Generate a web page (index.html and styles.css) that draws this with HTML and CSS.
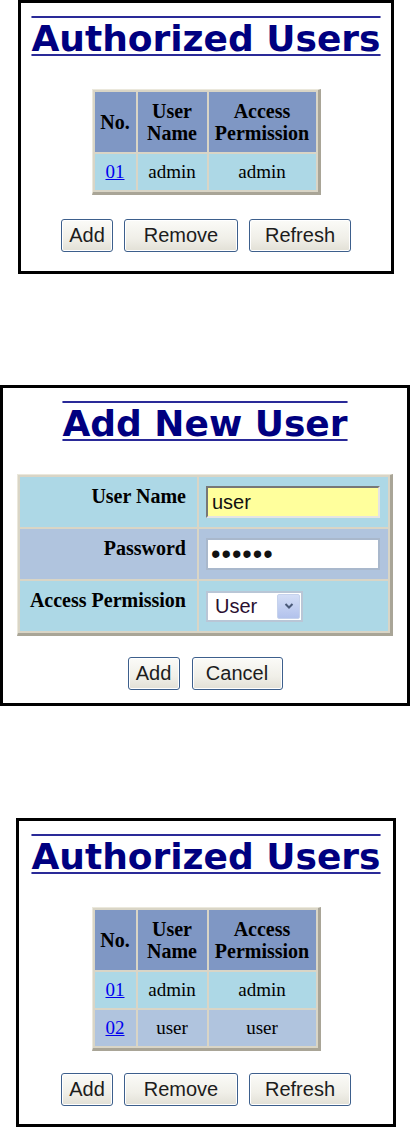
FILE: index.html
```html
<!DOCTYPE html>
<html lang="en">
<head>
  <meta charset="UTF-8" />
  <title>Authorized Users</title>
  <link rel="stylesheet" href="styles.css">
</head>
<body>

  <div class="shot shot-first">
    <h1 class="title"><span>Authorized Users</span></h1>
    <table class="grid users">
      <tr class="head">
        <th class="c-no">No.</th>
        <th class="c-name">User Name</th>
        <th class="c-perm">Access Permission</th>
      </tr>
      <tr class="row-a">
        <td><a href="#">01</a></td>
        <td>admin</td>
        <td>admin</td>
      </tr>
    </table>
    <div class="actions">
      <button class="btn w-add">Add</button>
      <button class="btn w-remove">Remove</button>
      <button class="btn w-refresh">Refresh</button>
    </div>
  </div>

  <div class="shot shot-add">
    <h1 class="title"><span>Add New User</span></h1>
    <table class="grid form">
      <tr class="row-a">
        <th class="label">User Name</th>
        <td class="field"><input type="text" class="txt focus" value="user"></td>
      </tr>
      <tr class="row-b">
        <th class="label">Password</th>
        <td class="field"><input type="password" class="txt pass" value="secret"></td>
      </tr>
      <tr class="row-a">
        <th class="label">Access Permission</th>
        <td class="field">
          <div class="select-box">
            <select class="sel">
              <option>User</option>
              <option>Admin</option>
            </select>
            <span class="arrow">
              <svg width="10" height="8" viewBox="0 0 10 8"><path d="M1.5 2 L5 5.5 L8.5 2" fill="none" stroke="#4a5a78" stroke-width="2"/></svg>
            </span>
          </div>
        </td>
      </tr>
    </table>
    <div class="actions">
      <button class="btn w-add">Add</button>
      <button class="btn w-cancel">Cancel</button>
    </div>
  </div>

  <div class="shot shot-last">
    <h1 class="title"><span>Authorized Users</span></h1>
    <table class="grid users">
      <tr class="head">
        <th class="c-no">No.</th>
        <th class="c-name">User Name</th>
        <th class="c-perm">Access Permission</th>
      </tr>
      <tr class="row-a">
        <td><a href="#">01</a></td>
        <td>admin</td>
        <td>admin</td>
      </tr>
      <tr class="row-b">
        <td><a href="#">02</a></td>
        <td>user</td>
        <td>user</td>
      </tr>
    </table>
    <div class="actions">
      <button class="btn w-add">Add</button>
      <button class="btn w-remove">Remove</button>
      <button class="btn w-refresh">Refresh</button>
    </div>
  </div>

</body>
</html>
```

FILE: styles.css
```css
* { box-sizing: border-box; }

body {
  margin: 0;
  background: #fff;
  font-family: "Liberation Serif", "Times New Roman", serif;
  color: #000;
}

/* each screenshot frame */
.shot {
  border: 3px solid #000;
  background: #fff;
  text-align: center;
}

.shot-first { margin-left: 18px; width: 376px; height: 274px; }
.shot-add { margin-top: 111px; width: 410px; height: 321px; }
.shot-last { margin-top: 112px; margin-left: 16px; width: 380px; height: 309px; }

.title {
  margin: 0;
  padding-top: 13px;
  height: 86px;
  font-family: "DejaVu Sans", Verdana, sans-serif;
  font-size: 36px;
  line-height: 46px;
  font-weight: bold;
  color: #000080;
}

.title span {
  text-decoration: underline overline;
  text-decoration-color: #2a2a98;
  text-decoration-thickness: 2px;
  text-underline-offset: 3px;
}

/* tables */
.grid {
  margin: 0 auto;
  border-style: solid;
  border-width: 1px 3px 3px 1px;
  border-color: #ebe8dc #a9a597 #a9a597 #ebe8dc;
  border-spacing: 2px;
  background: #d9d5c6;
  font-size: 19px;
  line-height: 22px;
}

.grid th, .grid td {
  padding: 0;
  text-align: center;
}

.head th {
  background: #7f97c4;
  font-size: 20px;
  height: 60px;
}

.users td { height: 36px; }

.row-a > * { background: #add8e6; }
.row-b > * { background: #b0c4de; }

.c-no { width: 41px; }
.c-name { width: 69px; }
.c-perm { width: 107px; }

.grid a { color: #0000ee; }

/* form table */
.form { width: 376px; }

.form th.label {
  width: 180px;
  height: 50px;
  font-size: 20px;
  text-align: right;
  vertical-align: top;
  padding: 8px 11px 0 0;
}

.form td.field {
  text-align: left;
  padding: 0 8px 0 7px;
}

.txt {
  display: block;
  width: 174px;
  height: 32px;
  margin: 0;
  padding: 0 4px;
  font-family: "Liberation Sans", Arial, sans-serif;
  font-size: 20px;
  color: #111;
  background: #fff;
  border: 2px solid #a9b8cc;
  outline: none;
}

.txt.focus {
  background: #ffff9c;
  border-color: #777 #e4e4e4 #e4e4e4 #777;
}

.txt.pass {
  font-size: 27px;
  letter-spacing: 1px;
  padding-left: 3px;
}

.select-box {
  display: flex;
  align-items: center;
  width: 97px;
  height: 31px;
  background: #fff;
  border: 2px solid #b9c6d6;
  padding: 1px;
}

.sel {
  appearance: none;
  -webkit-appearance: none;
  flex: 1;
  min-width: 0;
  border: none;
  background: transparent;
  font-family: "Liberation Sans", Arial, sans-serif;
  font-size: 20px;
  color: #2a1030;
  padding: 0 0 0 6px;
  outline: none;
}

.arrow {
  display: flex;
  align-items: center;
  justify-content: center;
  width: 23px;
  height: 100%;
  border-radius: 2px;
  background: linear-gradient(#d4def6, #b2c2ec);
  border: 1px solid #c6d2ec;
}

/* buttons */
.actions {
  display: flex;
  justify-content: center;
  gap: 11px;
  margin-top: 24px;
}

.btn {
  height: 33px;
  padding: 0;
  font-family: "Liberation Sans", Arial, sans-serif;
  font-size: 20px;
  color: #1c1c1c;
  background: linear-gradient(#fbfbf8, #f0efe8 60%, #e2e0d6);
  border: 1px solid #3d5f8c;
  border-radius: 3px;
  box-shadow: inset 0 0 0 1px #fff;
}

.w-add { width: 52px; }
.w-remove { width: 114px; }
.w-refresh { width: 102px; }
.w-cancel { width: 91px; }

.shot-add .actions { gap: 12px; margin-top: 21px; }
.shot-last .actions { margin-top: 22px; }
```
